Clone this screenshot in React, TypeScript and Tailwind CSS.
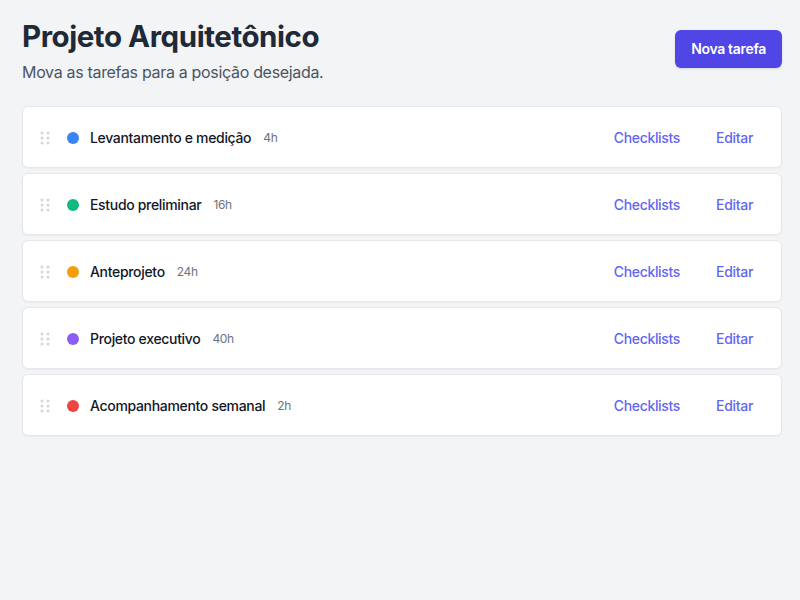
const tasks = [
  { name: "Levantamento e medição", hours: "4h", color: "bg-[#3b82f6]" },
  { name: "Estudo preliminar", hours: "16h", color: "bg-[#10b981]" },
  { name: "Anteprojeto", hours: "24h", color: "bg-[#f59e0b]" },
  { name: "Projeto executivo", hours: "40h", color: "bg-[#8b5cf6]" },
  { name: "Acompanhamento semanal", hours: "2h", color: "bg-[#ef4444]" },
];

function Grip() {
  return (
    <svg width="12" height="16" viewBox="0 0 12 16" className="text-gray-300" fill="currentColor">
      <circle cx="3" cy="3" r="1.5" />
      <circle cx="9" cy="3" r="1.5" />
      <circle cx="3" cy="8" r="1.5" />
      <circle cx="9" cy="8" r="1.5" />
      <circle cx="3" cy="13" r="1.5" />
      <circle cx="9" cy="13" r="1.5" />
    </svg>
  );
}

export default function App() {
  return (
    <div className="min-h-screen bg-[#f3f4f6] pl-[22px] pr-[18px] pt-4 font-['Inter',sans-serif] tracking-[-0.02em]">
      <div className="flex items-start justify-between">
        <div>
          <h1 className="mt-[2px] text-[29.5px] font-bold text-[#1f2937] leading-9 tracking-[-0.015em]">
            Projeto Arquitetônico
          </h1>
          <p className="mt-[6px] text-base text-[#4b5563]">Mova as tarefas para a posição desejada.</p>
        </div>
        <button className="mt-[14px] rounded-md bg-[#4f46e5] px-4 h-[38px] text-sm font-semibold text-white shadow-sm">
          Nova tarefa
        </button>
      </div>

      <div className="mt-[22px] flex flex-col gap-[5px]">
        {tasks.map((t) => (
          <div
            key={t.name}
            className="flex h-[62px] items-center justify-between rounded-md border border-[#e5e7eb] bg-white pl-4 pr-4 pt-px shadow-[0_1px_2px_rgba(0,0,0,0.04)]"
          >
            <div className="flex items-center">
              <Grip />
              <span className={`ml-[16px] h-3 w-3 rounded-full ${t.color}`} />
              <span className="ml-[11px] text-sm font-medium text-[#111827]">{t.name}</span>
              <span className="ml-3 text-xs text-[#6b7280]">{t.hours}</span>
            </div>
            <div className="flex items-center gap-3">
              <button className="px-3 py-1.5 text-sm font-medium text-[#6366f1]">Checklists</button>
              <button className="px-3 py-1.5 text-sm font-medium text-[#6366f1]">Editar</button>
            </div>
          </div>
        ))}
      </div>
    </div>
  );
}
